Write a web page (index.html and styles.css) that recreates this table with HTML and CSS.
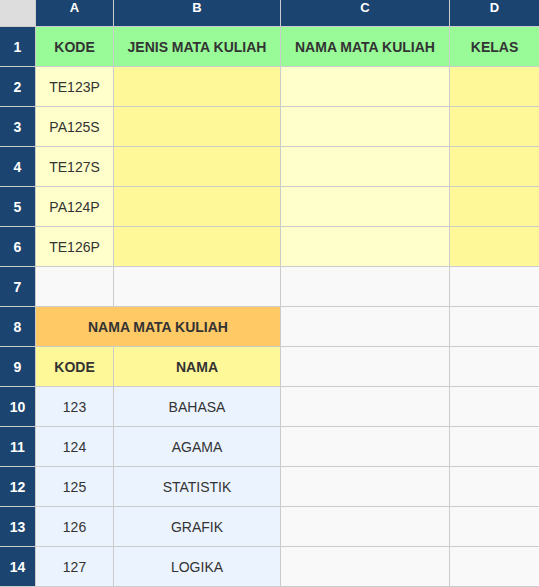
FILE: index.html
```html
<!DOCTYPE html>
<html>
<head>
<meta charset="utf-8">
<link rel="stylesheet" href="styles.css">
</head>
<body>
<div class="sheet">
  <div class="corner"></div>
  <div class="colhead">A</div>
  <div class="colhead">B</div>
  <div class="colhead">C</div>
  <div class="colhead">D</div>

  <div class="rowhead">1</div>
  <div class="cell green bold">KODE</div>
  <div class="cell green bold">JENIS MATA KULIAH</div>
  <div class="cell green bold">NAMA MATA KULIAH</div>
  <div class="cell green bold">KELAS</div>

  <div class="rowhead">2</div>
  <div class="cell ly">TE123P</div>
  <div class="cell yl"></div>
  <div class="cell ly"></div>
  <div class="cell yl"></div>

  <div class="rowhead">3</div>
  <div class="cell ly">PA125S</div>
  <div class="cell yl"></div>
  <div class="cell ly"></div>
  <div class="cell yl"></div>

  <div class="rowhead">4</div>
  <div class="cell ly">TE127S</div>
  <div class="cell yl"></div>
  <div class="cell ly"></div>
  <div class="cell yl"></div>

  <div class="rowhead">5</div>
  <div class="cell ly">PA124P</div>
  <div class="cell yl"></div>
  <div class="cell ly"></div>
  <div class="cell yl"></div>

  <div class="rowhead">6</div>
  <div class="cell ly">TE126P</div>
  <div class="cell yl"></div>
  <div class="cell ly"></div>
  <div class="cell yl"></div>

  <div class="rowhead">7</div>
  <div class="cell"></div>
  <div class="cell"></div>
  <div class="cell"></div>
  <div class="cell"></div>

  <div class="rowhead">8</div>
  <div class="cell orange bold span2">NAMA MATA KULIAH</div>
  <div class="cell"></div>
  <div class="cell"></div>

  <div class="rowhead">9</div>
  <div class="cell yl bold">KODE</div>
  <div class="cell yl bold">NAMA</div>
  <div class="cell"></div>
  <div class="cell"></div>

  <div class="rowhead">10</div>
  <div class="cell lb">123</div>
  <div class="cell lb">BAHASA</div>
  <div class="cell"></div>
  <div class="cell"></div>

  <div class="rowhead">11</div>
  <div class="cell lb">124</div>
  <div class="cell lb">AGAMA</div>
  <div class="cell"></div>
  <div class="cell"></div>

  <div class="rowhead">12</div>
  <div class="cell lb">125</div>
  <div class="cell lb">STATISTIK</div>
  <div class="cell"></div>
  <div class="cell"></div>

  <div class="rowhead">13</div>
  <div class="cell lb">126</div>
  <div class="cell lb">GRAFIK</div>
  <div class="cell"></div>
  <div class="cell"></div>

  <div class="rowhead">14</div>
  <div class="cell lb">127</div>
  <div class="cell lb">LOGIKA</div>
  <div class="cell"></div>
  <div class="cell"></div>
</div>
</body>
</html>
```

FILE: styles.css
```css
html, body {
  margin: 0;
  padding: 0;
  background: #f9f9f9;
}

.sheet {
  display: grid;
  grid-template-columns: 35px 77px 166px 168px 89px;
  grid-template-rows: 26px repeat(14, 39px);
  gap: 1px;
  background: #cccccc;
  padding-bottom: 1px;
  width: 539px;
  font-family: "Liberation Sans", Arial, sans-serif;
  color: #333333;
}

.corner {
  background: #dddddd;
}

.colhead {
  background: #1b4570;
  color: #ffffff;
  font-weight: bold;
  font-size: 13px;
  text-align: center;
  line-height: 15px;
}

.rowhead {
  background: #1b4570;
  color: #ffffff;
  font-weight: bold;
  font-size: 14px;
  display: flex;
  align-items: center;
  justify-content: center;
}

.cell {
  background: #f9f9f9;
  font-size: 14px;
  display: flex;
  align-items: center;
  justify-content: center;
  white-space: nowrap;
}

.bold {
  font-weight: bold;
}

.green {
  background: #98fb98;
}

.ly {
  background: #ffffcc;
}

.yl {
  background: #fff899;
}

.orange {
  background: #ffc966;
}

.lb {
  background: #ebf3ff;
}

.span2 {
  grid-column: span 2;
}
```
